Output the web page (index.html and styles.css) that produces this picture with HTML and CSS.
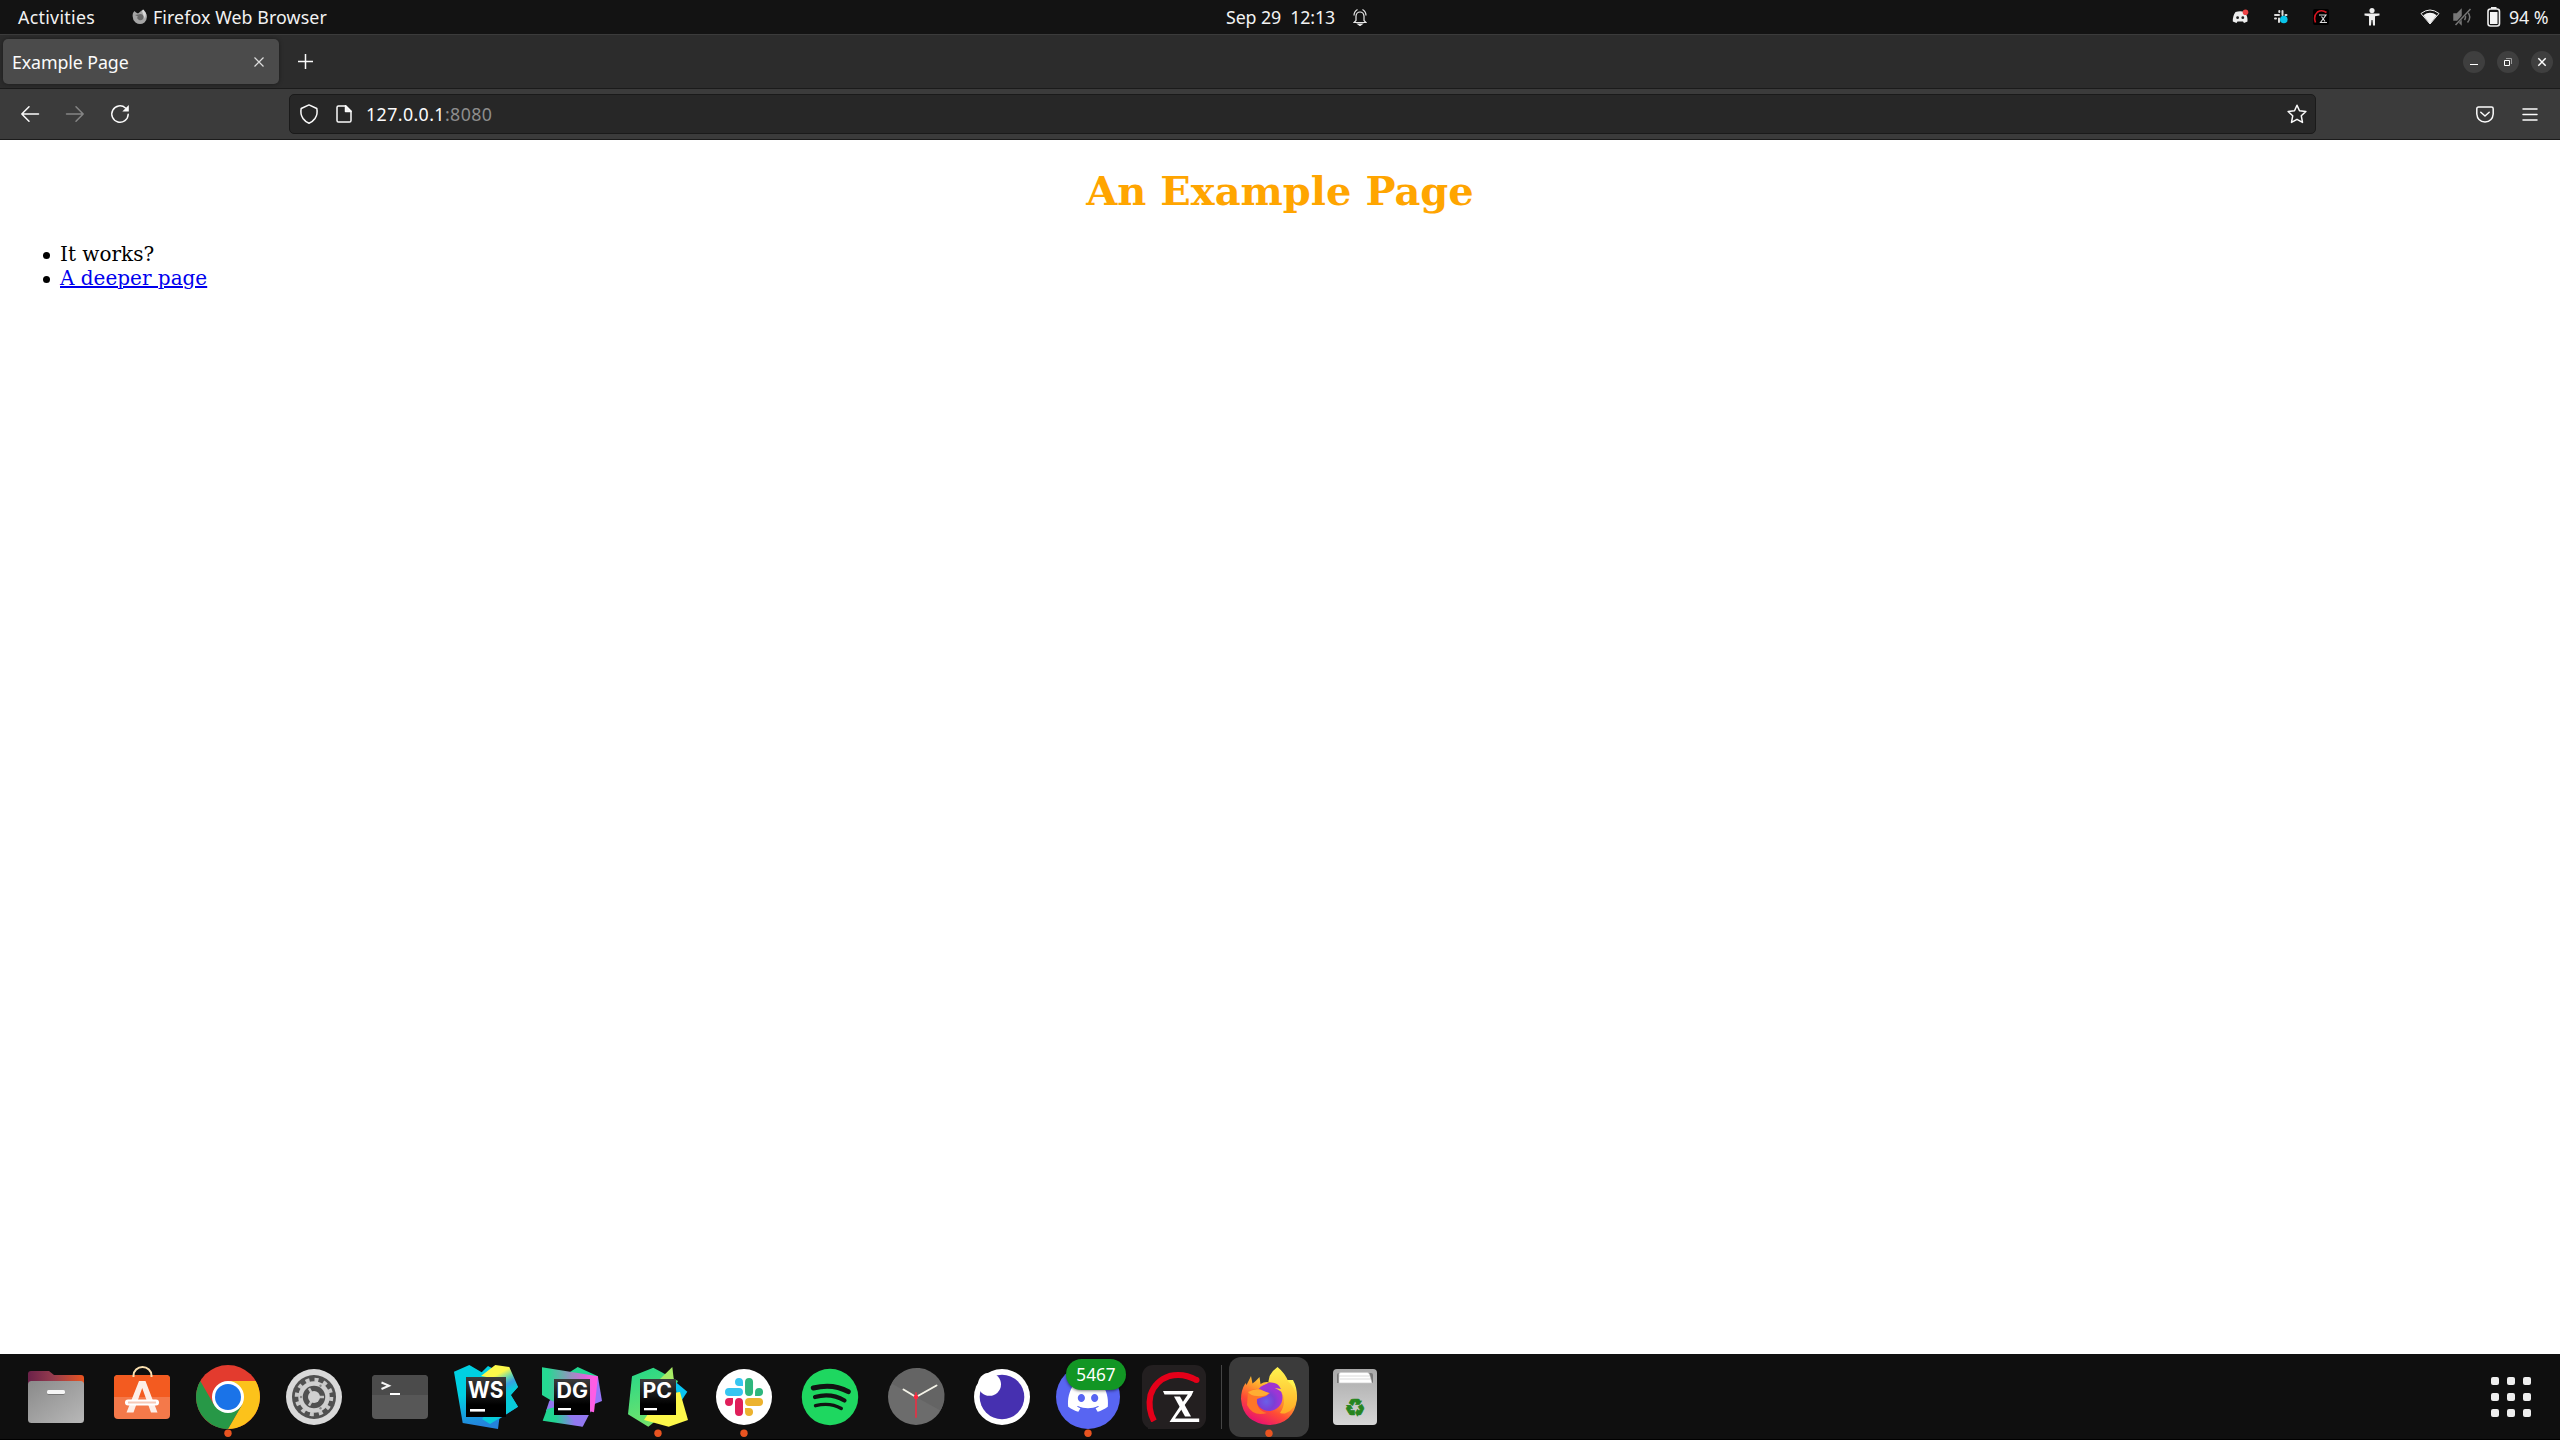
FILE: index.html
```html
<!DOCTYPE html>
<html lang="en">
<head>
<meta charset="utf-8">
<title>Example Page</title>
<link rel="stylesheet" href="styles.css">
</head>
<body>
<div class="desktop">
  <header class="topbar">
    <div class="top-left">
      <span class="activities">Activities</span>
      <svg class="app-mark" width="16" height="16" viewBox="0 0 16 16"><path fill="#a5a5a5" d="M1 4 2.500 2 4 3.500 6 4.500 9 2 11 .5 12 3 14.500 5Q16 10 12.500 13.500 8 16.500 3.500 13.500-.5 10 1 4Z"/><path fill="#666" d="M6 5.500Q11 4 11.500 8 11 12 7 11 4 9 6 7.500L3 6Z"/><path fill="#d8d8d8" d="M10 2 11.500.5 14 4 13 10 11 5Z"/></svg>
      <span class="app-name">Firefox Web Browser</span>
    </div>
    <div class="clock">
      <span class="date">Sep 29&nbsp; 12:13</span>
      <svg width="14" height="18" viewBox="0 0 14 18" fill="none" stroke="#e8e8e8" stroke-width="1.200"><path d="M3 12.500V8Q3.500 4 7 4T11 8V12.500L13 14.500H1ZM1 7.500Q1 3.500 4.500 1.500M13 7.500Q13 3.500 9.500 1.500"/><path d="M5 16H9L7 17.500Z" fill="#fff"/></svg>
    </div>
    <div class="tray">
      <svg class="t-discord" width="17" height="16" viewBox="0 0 17 16"><path fill="#eee" d="M3.500 3Q8 1.500 13 3 16 8 15.500 12.500L12 14 11 12.500H5.500L4.500 14 .8 12.500Q.5 7 3.500 3Z"/><circle cx="5.600" cy="8.700" r="1.400" fill="#222"/><circle cx="10.800" cy="8.700" r="1.400" fill="#222"/><circle cx="13.500" cy="3.200" r="2.800" fill="#ed4245"/></svg>
      <svg class="t-slack" width="16" height="16" viewBox="0 0 16 16"><path stroke="#ddd" stroke-width="2" stroke-linecap="round" fill="none" d="M2 6H6M6.300 2V3M9.500 2V6M12.500 6H13.500M2 9.500H3M6 9.500V13"/><circle cx="10.800" cy="10.500" r="3.800" fill="#0bc5ea"/></svg>
      <svg class="t-zx" width="16" height="16" viewBox="0 0 16 16"><rect width="16" height="16" rx="2" fill="#000"/><path d="M2.500 13.500Q0 7 4.500 3 9 .2 13.500 3.500" fill="none" stroke="#d7141f" stroke-width="1.600"/><path d="M6 6H13L7.500 13.500H14M8.500 7.500 12 12.500" fill="none" stroke="#ddd" stroke-width="1.100"/></svg>
      <svg class="t-access" width="16" height="18" viewBox="0 0 16 18" fill="#eee"><circle cx="8" cy="2.600" r="2.600"/><path d="M.5 5.500H15.500V7.500L11 8.300V17.500H9L8.500 12H7.500L7 17.500H5V8.300L.5 7.500Z"/></svg>
      <svg class="t-wifi" width="20" height="16" viewBox="0 0 20 16"><path d="M1 4.500Q10-2.500 19 4.500L10 15Z" fill="none" stroke="#eee" stroke-width="1" stroke-linejoin="round"/><path d="M3.300 6.200Q10 1.300 16.700 6.200L10 15Z" fill="#f2f2f2"/></svg>
      <svg class="t-vol" width="19" height="18" viewBox="0 0 19 18" fill="none" stroke="#777" stroke-width="1.500"><path fill="#777" d="M1 6H4L8 2V16L4 12H1Z"/><path d="M11.500 6Q13.500 9 11.500 12M14.500 4Q19 9 14.500 14.500"/><path d="M17 1 2 17" stroke="#131313" stroke-width="2.600"/><path d="M17.500 1 2.500 17"/></svg>
      <svg class="t-bat" width="14" height="20" viewBox="0 0 14 20"><rect x="1" y="2" width="11.500" height="17" rx="2.500" fill="none" stroke="#eee" stroke-width="1.600"/><rect x="4" y="0" width="5.500" height="2" fill="#eee"/><rect x="3" y="5" width="7.500" height="12" fill="#f4f4f4"/></svg>
      <span class="charge">94 %</span>
    </div>
  </header>

  <div class="tabstrip">
    <div class="tab"><span class="tab-title">Example Page</span>
      <svg width="10" height="10" viewBox="0 0 10 10" stroke="#ddd" stroke-width="1.200"><path d="M.5.5 9.500 9.500M9.500.5.5 9.500"/></svg>
    </div>
    <svg class="newtab" width="15" height="15" viewBox="0 0 15 15" stroke="#fbfbfb" stroke-width="1.500"><path d="M7.500 0V15M0 7.500H15"/></svg>
    <div class="window-buttons">
      <svg width="22" height="22" viewBox="0 0 22 22"><circle cx="11" cy="11" r="11" fill="#3f3f3f"/><path d="M7 13.500H15" stroke="#fff"/></svg>
      <svg width="22" height="22" viewBox="0 0 22 22"><circle cx="11" cy="11" r="11" fill="#3f3f3f"/><path d="M7.500 9.500H12.500V14.500H7.500Z" fill="none" stroke="#fff"/><path d="M9 7.500H14.500V13" fill="none" stroke="#999"/></svg>
      <svg width="22" height="22" viewBox="0 0 22 22"><circle cx="11" cy="11" r="11" fill="#3f3f3f"/><path d="M7.300 7.300 14.700 14.700M14.700 7.300 7.300 14.700" stroke="#fff" stroke-width="1.500"/></svg>
    </div>
  </div>

  <div class="toolbar">
    <div class="nav">
      <svg width="20" height="20" viewBox="0 0 20 20" fill="none" stroke="#fbfbfb" stroke-width="1.500" stroke-linecap="round" stroke-linejoin="round"><path d="M18.500 10H1.800M9 2.800 1.800 10 9 17.200"/></svg>
      <svg width="20" height="20" viewBox="0 0 20 20" fill="none" stroke="#858585" stroke-width="1.500" stroke-linecap="round" stroke-linejoin="round"><path d="M1.500 10H18.200M11 2.800 18.200 10 11 17.200"/></svg>
      <svg width="20" height="20" viewBox="0 0 20 20"><path d="M15.500 4A8.200 8.200 0 1 0 18.200 10.300" fill="none" stroke="#fbfbfb" stroke-width="1.500" stroke-linecap="round"/><path d="M18.800 1V7.500H12.300Z" fill="#fbfbfb"/></svg>
    </div>
    <div class="urlbar">
      <svg width="20" height="20" viewBox="0 0 20 20" fill="none" stroke="#fbfbfb" stroke-width="1.500" stroke-linejoin="round"><path d="M10 .9 17.800 4.500Q19 10 16 14.500 13.500 18 10 19.200 6.500 18 4 14.500 1 10 2.200 4.500Z"/></svg>
      <svg class="doc" width="16" height="18" viewBox="0 0 16 18" fill="none" stroke="#fbfbfb" stroke-width="1.500" stroke-linejoin="round"><path d="M2.500.9H9.500L15 6.400V15.500Q15 17.100 13.500 17.100H2.500Q1 17.100 1 15.500V2.500Q1 .9 2.500.9Z"/><path d="M9.500.9V6.400H15Z" fill="#eee"/></svg>
      <span class="url">127.0.0.1<span class="port">:8080</span></span>
      <svg class="star" width="20" height="20" viewBox="0 0 20 20" fill="none" stroke="#fbfbfb" stroke-width="1.500" stroke-linejoin="round"><path d="M10 1.300 12.500 6.800 18.900 7.500 14.300 11.800 15.500 18.400 10 15.300 4.500 18.400 5.700 11.800 1.100 7.500 7.500 6.800Z"/></svg>
    </div>
    <div class="tools">
      <svg width="18" height="17" viewBox="0 0 18 17" fill="none" stroke="#fbfbfb" stroke-width="1.500" stroke-linecap="round" stroke-linejoin="round"><path d="M2.500 1H15.500Q17.200 1 17.200 2.700V8Q16.500 15.600 9 15.900 1.500 15.600.8 8V2.700Q.8 1 2.500 1ZM4.800 6.200 9 10 13.200 6.200"/></svg>
      <svg width="16" height="13" viewBox="0 0 16 13" stroke="#fbfbfb" stroke-width="1.500" stroke-linecap="round"><path d="M1 1H15M1 6.500H15M1 12H15"/></svg>
    </div>
  </div>

  <main class="page">
    <h1>An Example Page</h1>
    <ul>
      <li>It works?</li>
      <li><a href="#deeper">A deeper page</a></li>
    </ul>
  </main>

  <footer class="dock">
    <svg class="tile" viewBox="0 0 80 80">
      <defs>
        <linearGradient id="folderBack"><stop offset="0" stop-color="#6b2149"/><stop offset=".45" stop-color="#963c4e"/><stop offset="1" stop-color="#e95420"/></linearGradient>
        <linearGradient id="folderFront" x2="1" y2="1"><stop offset="0" stop-color="#8a8a8a"/><stop offset="1" stop-color="#b8b8b8"/></linearGradient>
      </defs>
      <path fill="url(#folderBack)" d="M15 14H33L38 18H65Q68 18 68 21V40H12V17Q12 14 15 14Z"/>
      <rect x="12" y="24" width="56" height="42" rx="3.500" fill="url(#folderFront)"/>
      <rect x="31" y="34" width="18" height="4" rx="2" fill="#777"/><rect x="31" y="33" width="18" height="4" rx="1.500" fill="#f5f5f5"/>
    </svg>
    <svg class="tile" viewBox="0 0 80 80">
      <rect x="12" y="18" width="56" height="44" rx="4" fill="#f4794a"/><path fill="#f35b20" d="M12 40V22Q12 18 16 18H64Q68 18 68 22V40Z"/>
      <path d="M31.500 20V18.500A9 8.500 0 0 1 49.500 18.500V20" fill="none" stroke="#fbe0b0" stroke-width="2"/>
      <path d="M37 24H43.500L55.500 55.500H49L40.200 31 31.500 55.500H24.500Z" fill="#fdeee7"/>
      <rect x="23" y="42.500" width="34" height="6" rx="3" fill="#fff"/><path d="M26 45.500H54" stroke="#f6c9b7" stroke-width="2"/>
    </svg>
    <svg class="tile" viewBox="0 0 80 80">
      <circle cx="40" cy="40" r="32" fill="#e33b2e"/>
      <path fill="#fcc21b" d="M40 24H67.700A32 32 0 0 1 40 72L53.900 48Z"/>
      <path fill="#279847" d="M12.300 24A32 32 0 0 0 40 72L53.900 48 40 50 26.100 48Z"/>
      <circle cx="40" cy="40" r="16" fill="#fff"/><circle cx="40" cy="40" r="13" fill="#1a73e8"/>
      <circle class="running" cx="40" cy="76.300" r="3.700"/>
    </svg>
    <svg class="tile" viewBox="0 0 80 80">
      <circle cx="40" cy="40" r="28" fill="#d9d9d9"/><circle cx="40" cy="40" r="22" fill="#505050"/>
      <circle cx="40" cy="40" r="17.300" fill="none" stroke="#c8c8c8" stroke-width="4" stroke-dasharray="4 5.058"/>
      <circle cx="40" cy="40" r="13.500" fill="none" stroke="#cfcfcf" stroke-width="4.500"/>
      <path d="M40 40 50 40M40 40 35 31.300M40 40 35 48.700" stroke="#c4c4c4" stroke-width="2.500"/>
      <circle cx="40" cy="40" r="6" fill="#d0d0d0"/>
      <g fill="#888"><circle cx="27" cy="40" r="1.200"/><circle cx="46.500" cy="28.700" r="1.200"/><circle cx="46.500" cy="51.300" r="1.200"/></g>
    </svg>
    <svg class="tile" viewBox="0 0 80 80">
      <rect x="12" y="18" width="56" height="44" rx="4" fill="#575757"/><path fill="#4b4b4b" d="M12 38V22Q12 18 16 18H64Q68 18 68 22V38Z"/>
      <path d="M21.500 25.500 29 28.700 21.500 32" fill="none" stroke="#f5f5f5" stroke-width="2"/><path d="M30 37H40" stroke="#fff" stroke-width="2"/>
    </svg>
    <svg class="tile" viewBox="0 0 80 80">
      <defs>
        <linearGradient id="wsBase" x1=".4" x2=".6" y2="1"><stop offset=".4" stop-color="#00d0e2"/><stop offset=".9" stop-color="#2483dc"/></linearGradient>
        <linearGradient id="wsYellow" x1=".2" y1=".1" x2=".7" y2="1"><stop offset=".25" stop-color="#fcf84a"/><stop offset=".45" stop-color="#64d6b0"/><stop offset=".6" stop-color="#3a9ee0"/><stop offset=".8" stop-color="#08cbd9"/></linearGradient>
        <linearGradient id="ideBox" x2="0" y2="1"><stop offset="0" stop-color="#3c3c3c"/><stop offset=".7" stop-color="#000"/></linearGradient>
      </defs>
      <path fill="url(#wsBase)" d="M8 14.700 23.300 8 35.700 15.300 42 9 63 20 72 30 64.700 38 72 49.700 53.300 62 52 72 16.700 66Z"/>
      <path fill="#08cbd9" d="M60 30 72 49.700 44 67 36 62Z"/>
      <path fill="url(#wsYellow)" d="M35 19 49.300 8 63.300 10 72 29.700 60 44 52 22Z"/>
      <rect x="20" y="20" width="40" height="40" fill="url(#ideBox)"/>
      <text class="ide" x="22" y="41.300" font-size="23.500" textLength="35.500" lengthAdjust="spacingAndGlyphs">WS</text><rect x="24" y="52" width="15" height="2.600" fill="#fff"/>
    </svg>
    <svg class="tile" viewBox="0 0 80 80">
      <defs>
        <linearGradient id="dgBand"><stop offset=".1" stop-color="#25d992"/><stop offset=".75" stop-color="#d66ad9"/><stop offset=".9" stop-color="#ff5de5"/></linearGradient>
        <linearGradient id="dgLow"><stop offset=".3" stop-color="#20d490"/><stop offset=".8" stop-color="#9278f0"/></linearGradient>
      </defs>
      <path fill="#22d68f" d="M38 15 45.700 10 66 19.300 60 26Z"/><path fill="#9775f8" d="M60 20H66L70 44 60 48Z"/>
      <path fill="#9278f0" d="M17.300 44 24 38 60 52 50.700 69.700 14 54Z"/>
      <path fill="url(#dgLow)" d="M10.700 63.700 15 52 24 50 50.700 69.700Z"/>
      <path fill="url(#dgBand)" d="M10 10.300 66 19.300 62 55.300 52 53 20 44 10 38Z"/>
      <rect x="22" y="22" width="36" height="36" fill="url(#ideBox)"/>
      <text class="ide" x="24.500" y="41.300" font-size="21" textLength="31.500" lengthAdjust="spacingAndGlyphs">DG</text><rect x="26" y="51" width="13" height="2.300" fill="#fff"/>
    </svg>
    <svg class="tile" viewBox="0 0 80 80">
      <defs><linearGradient id="pcBase" x2=".3" y2="1"><stop offset="0" stop-color="#21d789"/><stop offset="1" stop-color="#72e26c"/></linearGradient></defs>
      <path fill="url(#pcBase)" d="M14 19.300 35.300 10.700 60 24 40 62 30.300 69.700 10 57.300Z"/>
      <path fill="#a9ec66" d="M54.300 10 56 24 41 23Z"/><path fill="#09c5f2" d="M57 24.500 69.300 34.700 60 49Z"/>
      <path fill="#fcf84a" d="M62 35 70 63 50.700 69.700 26 63 32 54 55 36Z"/>
      <rect x="22" y="22" width="36" height="36" fill="url(#ideBox)"/>
      <text class="ide" x="24.500" y="41.300" font-size="21" textLength="29.500" lengthAdjust="spacingAndGlyphs">PC</text><rect x="26" y="51" width="13" height="2.300" fill="#fff"/>
      <circle class="running" cx="40" cy="76.300" r="3.700"/>
    </svg>
    <svg class="tile" viewBox="0 0 80 80">
      <circle cx="40" cy="40" r="28" fill="#fff"/>
      <g transform="translate(21 20.900) scale(1.585)">
        <path fill="#e01e5a" d="M5.042 15.165a2.528 2.528 0 0 1-2.520 2.523A2.528 2.528 0 0 1 0 15.165a2.527 2.527 0 0 1 2.522-2.520h2.520zM6.313 15.165a2.527 2.527 0 0 1 2.521-2.520 2.527 2.527 0 0 1 2.521 2.520v6.313A2.528 2.528 0 0 1 8.834 24a2.528 2.528 0 0 1-2.521-2.522z"/>
        <path fill="#36c5f0" d="M8.834 5.042a2.528 2.528 0 0 1-2.521-2.520A2.528 2.528 0 0 1 8.834 0a2.528 2.528 0 0 1 2.521 2.522v2.520zM8.834 6.313a2.528 2.528 0 0 1 2.521 2.521 2.528 2.528 0 0 1-2.521 2.521H2.522A2.528 2.528 0 0 1 0 8.834a2.528 2.528 0 0 1 2.522-2.521z"/>
        <path fill="#2eb67d" d="M18.956 8.834a2.528 2.528 0 0 1 2.522-2.521A2.528 2.528 0 0 1 24 8.834a2.528 2.528 0 0 1-2.522 2.521h-2.522zM17.688 8.834a2.528 2.528 0 0 1-2.523 2.521 2.527 2.527 0 0 1-2.520-2.521V2.522A2.527 2.527 0 0 1 15.165 0a2.528 2.528 0 0 1 2.523 2.522z"/>
        <path fill="#ecb22e" d="M15.165 18.956a2.528 2.528 0 0 1 2.523 2.522A2.528 2.528 0 0 1 15.165 24a2.527 2.527 0 0 1-2.520-2.522v-2.522zM15.165 17.688a2.527 2.527 0 0 1-2.520-2.523 2.526 2.526 0 0 1 2.520-2.520h6.313A2.527 2.527 0 0 1 24 15.165a2.528 2.528 0 0 1-2.522 2.523z"/>
      </g>
      <circle class="running" cx="40" cy="76.300" r="3.700"/>
    </svg>
    <svg class="tile" viewBox="0 0 80 80">
      <circle cx="40" cy="40" r="28.200" fill="#1ed760"/>
      <g fill="none" stroke="#121212" stroke-linecap="round"><path stroke-width="5" d="M23.300 31Q43 26 58.300 34.700"/><path stroke-width="4.200" d="M25 40Q41 35.500 54.500 43.500"/><path stroke-width="3.400" d="M25.500 48.700Q40 45 51.300 51.500"/></g>
    </svg>
    <svg class="tile" viewBox="0 0 80 80">
      <circle cx="40" cy="40" r="28" fill="#6c6c6c"/><path fill="#646464" d="M15.500 26.500A28 28 0 1 1 64.500 53.500Z"/>
      <g stroke-width="2" stroke-linecap="round"><path d="M40 40 27.500 32.500M40 40 60.500 28.500" stroke="#f4f3e8"/><path d="M40 36V60" stroke="#d13a4b"/></g><circle cx="40" cy="40" r="2.300" fill="#ff2740"/>
    </svg>
    <svg class="tile" viewBox="0 0 80 80">
      <circle cx="40" cy="40" r="28" fill="#fff"/><circle cx="40" cy="40" r="22.300" fill="#4630b0"/><circle cx="27.500" cy="27.300" r="11.500" fill="#fff"/>
    </svg>
    <div class="tile badged">
      <svg class="tile" viewBox="0 0 80 80">
        <circle cx="40" cy="40" r="32" fill="#5865f2"/>
        <path transform="translate(20 19.500) scale(1.667)" fill="#fff" d="M20.317 4.370a19.791 19.791 0 00-4.885-1.515.074.074 0 00-.079.037c-.211.375-.445.865-.608 1.250-1.845-.276-3.680-.276-5.487 0-.164-.393-.406-.874-.618-1.250a.077.077 0 00-.079-.037 19.736 19.736 0 00-4.885 1.515.07.07 0 00-.032.028C.533 9.046-.319 13.580.099 18.058a.082.082 0 00.031.056c2.053 1.508 4.041 2.423 5.993 3.029a.078.078 0 00.084-.028c.462-.630.873-1.295 1.226-1.994a.076.076 0 00-.042-.106c-.653-.248-1.274-.549-1.872-.892a.077.077 0 01-.008-.128c.126-.094.252-.192.372-.291a.074.074 0 01.078-.011c3.928 1.793 8.180 1.793 12.061 0a.074.074 0 01.079.010c.120.099.246.198.373.292a.077.077 0 01-.007.128 12.299 12.299 0 01-1.873.891.077.077 0 00-.041.107c.360.698.772 1.363 1.225 1.993a.076.076 0 00.084.029c1.961-.607 3.950-1.522 6.002-3.029a.077.077 0 00.031-.055c.500-5.177-.838-9.674-3.549-13.660a.061.061 0 00-.031-.029zM8.020 15.331c-1.183 0-2.157-1.086-2.157-2.419 0-1.333.956-2.419 2.157-2.419 1.211 0 2.176 1.095 2.157 2.419 0 1.333-.956 2.419-2.157 2.419zm7.975 0c-1.183 0-2.157-1.086-2.157-2.419 0-1.333.955-2.419 2.157-2.419 1.211 0 2.176 1.095 2.157 2.419 0 1.333-.946 2.419-2.157 2.419Z"/>
        <circle class="running" cx="40" cy="76.300" r="3.700"/>
      </svg>
      <span class="badge">5467</span>
    </div>
    <svg class="tile" viewBox="0 0 80 80">
      <rect x="8" y="8" width="64" height="64" rx="11" fill="#231f20"/>
      <path d="M62.500 23Q49 15.500 35.500 19 21 24 16.500 38 13.500 52 20 64" fill="none" stroke="#e50019" stroke-width="6"/><circle cx="62.500" cy="23" r="3" fill="#e50019"/><path d="M14 65H30V72H14Z" fill="#231f20"/>
      <path d="M29 34H59.500L57.500 38.500 41 61.500H65.200V65H35.500L53.800 37.500H30.500Z" fill="#fff"/><path d="M40 39.500H46L57 59.500H51Z" fill="#fff"/>
    </svg>
    <span class="divider"></span>
    <svg class="tile active" viewBox="0 0 80 80">
      <defs>
        <linearGradient id="fxBody" x1=".85" y1=".1" x2=".3" y2="1"><stop offset="0" stop-color="#fff44f"/><stop offset=".35" stop-color="#ffa52c"/><stop offset=".65" stop-color="#ff4c35"/><stop offset="1" stop-color="#e60c75"/></linearGradient>
        <linearGradient id="fxFlame" x2="0" y2="1"><stop offset="0" stop-color="#fff44f"/><stop offset="1" stop-color="#ffab25"/></linearGradient>
        <radialGradient id="fxGlobe" cx=".4" cy=".65"><stop offset="0" stop-color="#6a60e8"/><stop offset=".6" stop-color="#7b3fd5"/><stop offset="1" stop-color="#9d35d5"/></radialGradient>
      </defs>
      <path fill="url(#fxBody)" d="M22 19 23.500 26.500Q27 24 30.500 20L31.500 27Q36 24 41 25.500L58 23 64 23Q68.500 31 68 42 65 67 40 68 14 66 12 42 12 33 16.500 26L17.500 28Z"/>
      <circle cx="40" cy="40.500" r="13.500" fill="url(#fxGlobe)"/>
      <path fill="url(#fxFlame)" d="M48.500 10Q56 16 59.500 25 65 29 68 40 67 52 57 56 55 57 51 56 58 46 53 35L46 31Q50 30 50.500 29 46 27 39.500 25 39 17 48.500 10Z"/>
      <path fill="#9e36d0" d="M39 26Q48 24 52 32L46 31Q40 26 34 29Z"/>
      <path fill="#ff7628" d="M19 35Q26 30 32 32.500 37 36 41 36 38 39 34 40L28 42Q27 53 38 56 24 60 18 48Z"/>
      <path fill="#ffad32" d="M19 35Q27 31 32 33L40 36Q36 40 28 39 22 39 19 35Z"/>
      <circle class="running" cx="40" cy="76.300" r="3.700"/>
    </svg>
    <svg class="tile" viewBox="0 0 80 80">
      <defs><linearGradient id="bin" x2="0" y2="1"><stop offset="0" stop-color="#aaa"/><stop offset="1" stop-color="#d6d6d6"/></linearGradient></defs>
      <rect x="18" y="12" width="44" height="56" rx="4" fill="url(#bin)"/><path fill="#777" d="M22 26V18Q22 16 24 16H56Q58 16 58 18V26Z"/>
      <path fill="#fff" stroke="#ccc" stroke-width=".7" d="M24 26V17Q24 15.500 26 15.500H52Q54 15.500 54.500 17.500L57 26Z"/><path d="M24 19H54M25 22H55" stroke="#ccc" stroke-width=".7"/>
      <text class="recycle" x="40" y="59.200" text-anchor="middle">♻</text>
    </svg>
    <svg class="tile apps" viewBox="0 0 80 80" fill="#eee"><rect x="20" y="20" width="8" height="8" rx="2"/><rect x="36" y="20" width="8" height="8" rx="2"/><rect x="52" y="20" width="8" height="8" rx="2"/><rect x="20" y="36" width="8" height="8" rx="2"/><rect x="36" y="36" width="8" height="8" rx="2"/><rect x="52" y="36" width="8" height="8" rx="2"/><rect x="20" y="52" width="8" height="8" rx="2"/><rect x="36" y="52" width="8" height="8" rx="2"/><rect x="52" y="52" width="8" height="8" rx="2"/></svg>
  </footer>
</div>
</body>
</html>
```
FILE: styles.css
```css
* { box-sizing: border-box; }
body { margin: 0; }
svg { display: block; flex: none; }
.desktop {
  width: 2560px;
  height: 1440px;
  display: flex;
  flex-direction: column;
  overflow: hidden;
  background: #fff;
  font: 17.8px/24px "Noto Sans", sans-serif;
  white-space: nowrap;
}

/* Shell top bar */
.topbar {
  height: 34px;
  display: grid;
  grid-template-columns: 1226px 1fr auto;
  align-items: center;
  background: #131313;
  color: #f2f2f2;
}
.top-left, .clock, .tray { display: flex; align-items: center; }
.top-left { padding-left: 18px; }
.activities { width: 114px; letter-spacing: .3px; }
.app-name { margin-left: 5px; letter-spacing: .1px; }
.date { width: 127px; letter-spacing: -.1px; }
.t-slack { margin-left: 24px; }
.t-zx { margin-left: 24px; }
.t-access { margin-left: 35px; }
.t-wifi { margin-left: 40px; }
.t-vol { margin-left: 13px; }
.t-bat { margin-left: 15px; }
.charge { width: 51px; margin-left: 8px; letter-spacing: -.1px; }

/* Browser tabs */
.tabstrip {
  height: 55px;
  display: flex;
  align-items: center;
  padding: 0 7px 0 3px;
  border-top: 1px solid #3b3b3b;
  border-bottom: 1px solid #1b1b1b;
  background: #2c2c2c;
}
.tab {
  width: 276px;
  height: 45px;
  display: flex;
  align-items: center;
  justify-content: space-between;
  padding: 0 15px 0 9px;
  border-radius: 5px;
  background: #4b4b4b;
  box-shadow: 0 0 4px rgba(0, 0, 0, .4);
  color: #fbfbfb;
}
.tab-title { letter-spacing: -.1px; }
.newtab { margin-left: 19px; }
.window-buttons { display: flex; gap: 12px; margin-left: auto; }

/* Navigation toolbar */
.toolbar {
  height: 51px;
  display: flex;
  align-items: center;
  border-bottom: 1px solid #1b1b1b;
  background: #3b3b3b;
}
.nav { width: 289px; display: flex; gap: 25px; padding-left: 20px; }
.urlbar {
  width: 2027px;
  height: 40px;
  display: flex;
  align-items: center;
  padding: 0 8px 0 9px;
  border: 1px solid #1a1a1a;
  border-radius: 5px;
  background: #272727;
}
.doc { margin-left: 17px; }
.url { margin-left: 14px; color: #fbfbfb; letter-spacing: .4px; }
.port { color: #8d8d8d; }
.star { margin-left: auto; }
.tools { display: flex; align-items: center; gap: 28px; margin-left: 160px; }

/* Page shown in the browser */
.page {
  flex: 1;
  padding: 27px 10px 0;
  font: 20px/24px "DejaVu Serif", serif;
  color: #000;
}
.page h1 {
  margin: 0;
  font-size: 40px;
  line-height: 48px;
  text-align: center;
  color: orange;
}
.page ul { margin: 27px 0 0; padding-left: 33px; list-style: none; }
.page li { display: flex; }
.page li::before {
  content: "";
  width: 7px;
  height: 7px;
  margin: 10px 10px 0 0;
  border-radius: 50%;
  background: #000;
}
.page a { color: #00e; }

/* Dock */
.dock {
  height: 86px;
  display: flex;
  align-items: flex-start;
  gap: 6px;
  padding: 3px 9px 0 16px;
  border-bottom: 1px solid #000;
  background: #0f0f0f;
}
.tile { width: 80px; height: 80px; flex: none; }
.badged { position: relative; }
.badge {
  position: absolute;
  left: 18px;
  top: 2px;
  width: 60px;
  height: 31px;
  border-radius: 16px;
  background: #129624;
  box-shadow: 0 1px 3px rgba(0, 0, 0, .5);
  color: #fff;
  font-size: 17.2px;
  line-height: 31px;
  text-align: center;
}
.divider { width: 1px; height: 64px; margin: 8px 1px 0; background: #454545; }
.active { border-radius: 12px; background: #3b3b3b; }
.apps { margin-left: auto; }
.running { fill: #e95420; }
.ide { font-family: "Inter", sans-serif; font-weight: 700; fill: #fff; }
.recycle { font: 24px "DejaVu Sans", sans-serif; fill: #26851f; stroke: #26851f; stroke-width: .7; }
```
